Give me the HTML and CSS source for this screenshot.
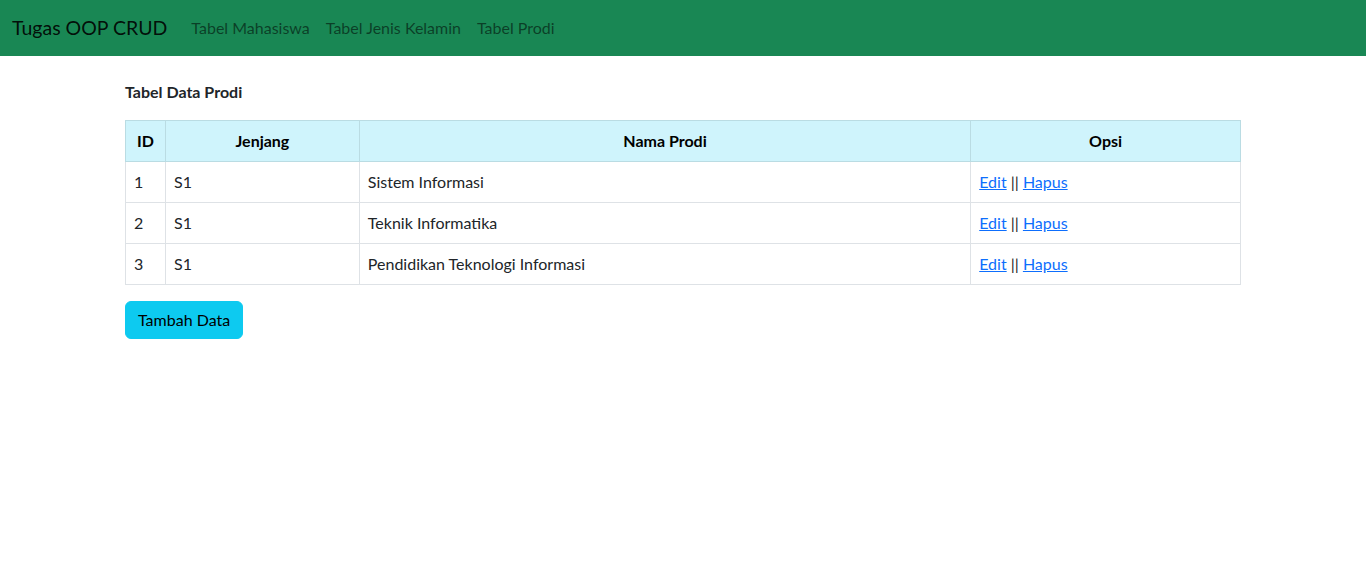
FILE: index.html
```html
<!DOCTYPE html>
<html lang="id">
<head>
<meta charset="utf-8">
<title>Tugas OOP CRUD</title>
<link rel="stylesheet" href="styles.css">
</head>
<body>
<nav class="navbar">
  <a class="brand" href="#">Tugas OOP CRUD</a>
  <ul class="nav">
    <li><a class="nav-link" href="#">Tabel Mahasiswa</a></li>
    <li><a class="nav-link" href="#">Tabel Jenis Kelamin</a></li>
    <li><a class="nav-link" href="#">Tabel Prodi</a></li>
  </ul>
</nav>
<main class="container">
  <p class="title">Tabel Data Prodi</p>
  <table class="table">
    <colgroup>
      <col class="c-id"><col class="c-jenjang"><col class="c-nama"><col class="c-opsi">
    </colgroup>
    <thead>
      <tr><th>ID</th><th>Jenjang</th><th>Nama Prodi</th><th>Opsi</th></tr>
    </thead>
    <tbody>
      <tr><td>1</td><td>S1</td><td>Sistem Informasi</td><td><a href="#">Edit</a> || <a href="#">Hapus</a></td></tr>
      <tr><td>2</td><td>S1</td><td>Teknik Informatika</td><td><a href="#">Edit</a> || <a href="#">Hapus</a></td></tr>
      <tr><td>3</td><td>S1</td><td>Pendidikan Teknologi Informasi</td><td><a href="#">Edit</a> || <a href="#">Hapus</a></td></tr>
    </tbody>
  </table>
  <a class="btn" href="#">Tambah Data</a>
</main>
</body>
</html>
```
FILE: styles.css
```css
* { box-sizing: border-box; }
body {
  margin: 0;
  font-family: Lato, "Noto Sans", sans-serif;
  font-size: 16px;
  line-height: 1.5;
  color: #212529;
  background: #fff;
}
.navbar {
  background: #198754;
  height: 56px;
  padding: 8px 12px;
  display: flex;
  align-items: center;
}
.brand {
  font-size: 19.5px;
  line-height: 30px;
  color: rgba(0,0,0,.9);
  text-decoration: none;
  margin-right: 16px;
}
.nav {
  display: flex;
  list-style: none;
  margin: 0;
  padding: 0;
}
.nav-link {
  display: block;
  padding: 8px;
  color: rgba(0,0,0,.55);
  text-decoration: none;
}
.container {
  width: 1140px;
  margin: 24px auto 0;
  padding: 0 12px;
}
.title {
  margin: 0 0 16px;
  font-weight: 700;
}
.table {
  width: 100%;
  border-collapse: collapse;
  margin-bottom: 16px;
}
.c-id { width: 40px; }
.c-jenjang { width: 194px; }
.c-nama { width: 612px; }
.c-opsi { width: 270px; }
.table th, .table td {
  border: 1px solid #dee2e6;
  padding: 8px;
  text-align: left;
  vertical-align: top;
}
.table thead th {
  background: #cff4fc;
  border-color: #badce3;
  text-align: center;
  font-weight: 700;
  color: #000;
}
.table a { color: #0d6efd; }
.btn {
  display: inline-block;
  background: #0dcaf0;
  color: #000;
  text-decoration: none;
  padding: 6px 12px;
  border: 1px solid #0dcaf0;
  border-radius: 6px;
  line-height: 24px;
}
```
